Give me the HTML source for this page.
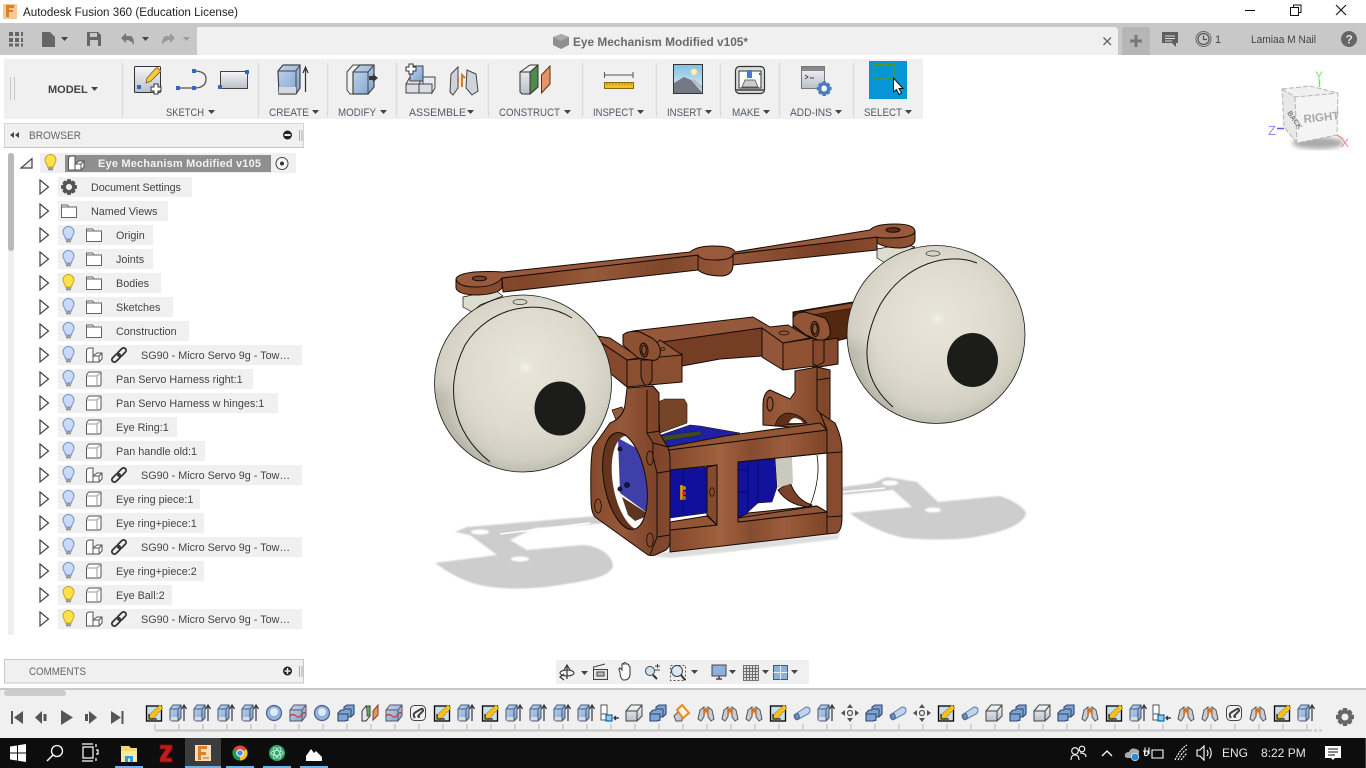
<!DOCTYPE html>
<html lang="en"><head><meta charset="utf-8"><title>Autodesk Fusion 360</title>
<style>
html,body{margin:0;padding:0;width:1366px;height:768px;overflow:hidden;background:#fff}
svg{display:block;position:absolute;left:0;top:0}
text{font-family:"Liberation Sans",sans-serif;font-size:11px;fill:#444}
.tb{font-size:11px;fill:#515a68}
.br text{fill:#444;font-size:10.8px}
</style></head><body>
<svg width="1366" height="768" viewBox="0 0 1366 768" xmlns="http://www.w3.org/2000/svg">
<defs>
<linearGradient id="wood" gradientUnits="userSpaceOnUse" x1="590" y1="0" x2="850" y2="0"><stop offset="0" stop-color="#84492c"/><stop offset=".12" stop-color="#96583b"/><stop offset=".25" stop-color="#7d442a"/><stop offset=".36" stop-color="#8a4e31"/><stop offset=".5" stop-color="#a0623f"/><stop offset=".62" stop-color="#874c2f"/><stop offset=".75" stop-color="#9a5c3c"/><stop offset=".9" stop-color="#804629"/><stop offset="1" stop-color="#945637"/></linearGradient>
<linearGradient id="barw" gradientUnits="userSpaceOnUse" x1="456" y1="0" x2="915" y2="0"><stop offset="0" stop-color="#8d5030"/><stop offset=".15" stop-color="#80462b"/><stop offset=".3" stop-color="#965a39"/><stop offset=".45" stop-color="#80462b"/><stop offset=".6" stop-color="#95583a"/><stop offset=".8" stop-color="#7a3f25"/><stop offset="1" stop-color="#8f5233"/></linearGradient>
<radialGradient id="eyeL" gradientUnits="userSpaceOnUse" cx="524" cy="372" r="102" fx="526" fy="367"><stop offset="0" stop-color="#f4f2e9"/><stop offset=".07" stop-color="#e7e4d8"/><stop offset=".6" stop-color="#dedbce"/><stop offset=".85" stop-color="#d2d0c2"/><stop offset="1" stop-color="#bcbcae"/></radialGradient>
<radialGradient id="eyeR" gradientUnits="userSpaceOnUse" cx="937" cy="323" r="102" fx="937" fy="319"><stop offset="0" stop-color="#f4f2e9"/><stop offset=".07" stop-color="#e7e4d8"/><stop offset=".6" stop-color="#dedbce"/><stop offset=".85" stop-color="#d2d0c2"/><stop offset="1" stop-color="#bcbcae"/></radialGradient>
<linearGradient id="bl" x1="0" y1="0" x2="1" y2="1"><stop offset="0" stop-color="#c3d6ee"/><stop offset="1" stop-color="#7ea2cf"/></linearGradient>
<linearGradient id="gr" x1="0" y1="0" x2="0" y2="1"><stop offset="0" stop-color="#f6f6f8"/><stop offset="1" stop-color="#b9bfca"/></linearGradient>
<linearGradient id="sky" x1="0" y1="0" x2="0" y2="1"><stop offset="0" stop-color="#7fc0e6"/><stop offset="1" stop-color="#e6f0ee"/></linearGradient>
<clipPath id="holeC"><ellipse cx="625" cy="481" rx="21" ry="49" transform="rotate(-10 625 481)"/></clipPath>
<clipPath id="eyeLC"><circle cx="523" cy="383.500" r="88"/></clipPath>
<clipPath id="eyeRC"><circle cx="936" cy="334.500" r="88.500"/></clipPath>
<filter id="sb"><feGaussianBlur stdDeviation="0.9"/></filter>
<filter id="sb2"><feGaussianBlur stdDeviation="2.5"/></filter>
<filter id="sb3"><feGaussianBlur stdDeviation="6"/></filter>

<path id="c" d="M0,0h7l-3.5,4z" fill="#444"/>
<g id="ex"><path d="M-4,-7L4.5,0L-4,7Z" fill="#fff" stroke="#444" stroke-width="1.2"/></g>
<g id="bb"><path d="M-3,4C-3,1-5.500,0-5.500,-3A5.500,5.500 0 0 1 5.500,-3C5.500,0 3,1 3,4Z" fill="#cbdaf6" stroke="#7292d4"/><rect x="-2.600" y="4.500" width="5.200" height="3" rx="1" fill="#9a9a9a"/></g>
<g id="by"><path d="M-3,4C-3,1-5.500,0-5.500,-3A5.500,5.500 0 0 1 5.500,-3C5.500,0 3,1 3,4Z" fill="#ffe24a" stroke="#c7a625"/><rect x="-2.600" y="4.500" width="5.200" height="3" rx="1" fill="#9a9a9a"/></g>
<path id="fo" d="M-7.500,6.500V-6H-1.500L0,-4H7.500V6.500ZM-7.500,-4H0" fill="#fff" stroke="#666"/>
<g id="cp" fill="#fff" stroke="#555"><path d="M-7.500,7V-4Q-7.500,-7-4,-7H-1V7Z"/><path d="M-1,1L3,-2H8V4L5,7H-1Z"/><path d="M-1,1H5V7M5,1L8,-2"/></g>
<g id="bd" fill="#fff" stroke="#555"><path d="M-7.500,7V-3Q-7.500,-5-5,-7H7V5Q7,7 5,7Z"/><path d="M-7.500,-3H3V7M3,-3L7,-7" stroke="#999"/></g>
<g id="lk" fill="none" stroke="#333" stroke-width="1.800" transform="rotate(-45)"><rect x="-9" y="-2.500" width="10" height="5" rx="2.500"/><rect x="-1" y="-2.500" width="10" height="5" rx="2.500"/></g>

<g id="tex"><g transform="translate(1,0)"><path d="M-8,7V-4L-5,-8H3V5L0,8H-6Z" fill="url(#bl)" stroke="#445a80"/><path d="M-8,-4H0V8M0,-4L3,-8" fill="none" stroke="#445a80"/><rect x="-7.500" y="4" width="7" height="3.500" fill="#d8dde4"/></g><path d="M7,8V-7M4.500,-4L7,-8L9.500,-4" fill="none" stroke="#333" stroke-width="1.200"/></g>
<g id="tsk"><rect x="-7.500" y="-7" width="15" height="15" fill="#c9dcf0" stroke="#000" stroke-width="1.300"/><path d="M-5,6L-4,1L6,-8L9,-5L0,5Z" fill="#f3c11f" stroke="#7a6a20" stroke-width=".5"/><path d="M-5,1V6H3" fill="none" stroke="#222" stroke-width="1.200"/></g>
<g id="tsp"><circle r="7.500" fill="#8fb3dc" stroke="#4a628c" stroke-width="1.200"/><circle cy="-1" r="4" fill="#dfeaf6"/></g>
<g id="tsb"><path d="M-8,-3L-4,-8H8V3L4,8H-8Z" fill="url(#bl)" stroke="#556"/><path d="M-8,-3H4V8M4,-3L8,-8" fill="none" stroke="#556"/><path d="M-8,3Q-5,0-2,3T4,1Q6,-1,8,0" fill="none" stroke="#d6321f" stroke-width="1.200"/></g>
<g id="tco"><path d="M-8,0L-5,-3H-2V-6L1,-8H8V1L5,4H2V7L-1,8H-8Z" fill="#7da3d3" stroke="#2b4570" stroke-width="1.100"/><path d="M-8,1H2V8M-2,-3V-3M-1,-4H5V4" fill="none" stroke="#2b4570"/></g>
<g id="tpl"><path d="M-8,-2L-4,-7H0V3L-4,8H-8Z" fill="#e4e6ea" stroke="#333"/><path d="M-4,-7H0V3H-3V-2Z" fill="#6ea264" stroke="#333" stroke-width=".7"/><path d="M3,7V-2L8,-8V2Z" fill="#e59568" stroke="#7a4427"/></g>
<g id="tlk"><rect x="-7.500" y="-7.500" width="15" height="15" rx="4" fill="#f2f2f2" stroke="#444"/><path d="M-3,5Q-6,1-2,-1L3,-4Q5,-5 5,-2L1,2Q-1,4 2,4" fill="none" stroke="#444" stroke-width="2"/></g>
<g id="tjo"><path d="M-8,6L-6,-3L-2,-6V4L-5,8Z" fill="#c9ccd2" stroke="#555"/><path d="M8,6L6,-3L2,-6V4L5,8Z" fill="#c9ccd2" stroke="#555"/><path d="M-2,1L0,-4L2,1" fill="none" stroke="#e0761c" stroke-width="2"/></g>
<g id="tjp"><rect x="-8" y="-8" width="6" height="9" fill="#fff" stroke="#555"/><rect x="-8" y="1" width="6" height="6" fill="#fff" stroke="#555"/><rect x="-3" y="2" width="6" height="6" fill="#9cc6ea" stroke="#0a68b0" stroke-width="1.200"/><path d="M10,5H5M7,3L5,5L7,7" fill="none" stroke="#222" stroke-width="1.200"/></g>
<g id="tbx"><path d="M-8,-2L-3,-8H8V3L3,8H-8Z" fill="url(#gr)" stroke="#444"/><path d="M-8,-2H3V8M3,-2L8,-8" fill="none" stroke="#444"/></g>
<g id="tfi"><path d="M-8,3L-4,-1L0,4V8H-6Z" fill="#c7ccd4" stroke="#555"/><path d="M-5,-3L0,-8L7,0L1,5Z" fill="#f9f3e6" stroke="#ec8a1c" stroke-width="2"/></g>
<g id="ttu"><path d="M-8,2L4,-6Q8,-6 8,-3Q8,0 6,1L-5,7Q-8,6-8,2Z" fill="#c2d4ea" stroke="#5a7aa8"/><ellipse cx="-5" cy="3.500" rx="2.300" ry="3" fill="#6e8fbc" stroke="#44628c"/></g>
<g id="tmv" fill="#555"><circle r="2.500" fill="none" stroke="#555" stroke-width="1.200"/><path d="M0,-9L3,-5H-3ZM0,9L3,5H-3ZM-9,0L-5,3V-3ZM9,0L5,3V-3Z"/></g>
<path id="gear" d="M-2,-9H2L2.600,-6.400L4.800,-7.500L7.500,-4.800L6.400,-2.600L9,-2V2L6.400,2.600L7.500,4.800L4.800,7.500L2.600,6.400L2,9H-2L-2.600,6.400L-4.800,7.500L-7.500,4.800L-6.400,2.600L-9,2V-2L-6.400,-2.600L-7.500,-4.800L-4.800,-7.500L-2.600,-6.400ZM0,-3.500A3.500,3.500 0 1 0 0,3.500A3.500,3.500 0 1 0 0,-3.500Z" fill-rule="evenodd"/>
</defs>

<!-- window chrome -->
<rect width="1366" height="768" fill="#fff"/>
<rect x="3" y="4" width="14" height="15" rx="1" fill="#f7c89c"/><path d="M6,5H14V8H9V10H13V12H9V17H6Z" fill="#dd7f25"/>
<text x="23" y="16" style="font-size:12.400px;fill:#222" textLength="215" lengthAdjust="spacingAndGlyphs">Autodesk Fusion 360 (Education License)</text>
<path d="M1245,10.500H1255" stroke="#111" stroke-width="1"/>
<path d="M1290.500,7.500h8v8h-8zM1293.500,7.500v-2.500h7.500v7.500h-2.500" fill="none" stroke="#111"/>
<path d="M1336,5L1346,15M1346,5L1336,15" stroke="#111" stroke-width="1.100"/>

<rect x="0" y="23" width="1366" height="32" fill="#c8c8c8"/>
<path d="M197,55V27Q197,27 201,27H1114Q1118,27 1118,31V55Z" fill="#f0f0f0"/>
<path d="M1122,55V30Q1122,27 1125,27H1147Q1150,27 1150,30V55Z" fill="#b6b6b6"/>
<path d="M1136,35V47M1130,41H1142" stroke="#777" stroke-width="3"/>
<path d="M9,32h4v4h-4zM15,32h4v4h-4zM21,32h2v4h-2zM9,38h4v4h-4zM15,38h4v4h-4zM21,38h2v4h-2zM9,43.500h4v3h-4zM15,43.500h4v3h-4zM21,43.500h2v3h-2z" fill="#666"/>
<path d="M42,32H50L55,37V47H42Z" fill="#666"/><use href="#c" x="61" y="37" />
<path d="M87,32H98L101,35V46H87Z" fill="#666"/><rect x="90" y="33" width="7" height="4" fill="#c8c8c8"/><rect x="90" y="40" width="8" height="6" fill="#c8c8c8"/>
<path d="M121,38L126,33V36H131Q134,38 134,45Q131,40 126,40V43Z" fill="#777"/><use href="#c" x="142" y="37"/>
<path d="M175,38L170,33V36H165Q162,38 162,45Q165,40 170,40V43Z" fill="#9a9a9a"/><path d="M183,37h7l-3.500,4z" fill="#999"/>
<path d="M553,37L561,34L569,37V45L561,49L553,45Z" fill="#8f8f8f"/><path d="M553,37L561,41L569,37L561,34Z" fill="#aaa"/>
<text x="573" y="46" style="font-size:12px;font-weight:bold;fill:#6a6a6a" textLength="175" lengthAdjust="spacingAndGlyphs">Eye Mechanism Modified v105*</text>
<path d="M1103.500,37.500L1111,45M1111,37.500L1103.500,45" stroke="#666" stroke-width="1.400"/>
<path d="M1162,32H1178V43H1176V47L1172,43H1162Z" fill="#5f5f5f"/><path d="M1165,36H1175M1165,38.500H1175M1165,41H1172" stroke="#ddd"/>
<circle cx="1203.500" cy="39" r="7.500" fill="#c8c8c8" stroke="#666" stroke-width="1"/><circle cx="1203.500" cy="39" r="5.500" fill="#c8c8c8" stroke="#555" stroke-width="1.200"/><path d="M1203.500,35.500V39.500H1207" fill="none" stroke="#555" stroke-width="1.200"/>
<text x="1215" y="43">1</text>
<text x="1251" y="43" style="font-size:11px" textLength="65" lengthAdjust="spacingAndGlyphs">Lamiaa M Nail</text>
<circle cx="1349" cy="39" r="8" fill="#666"/><text x="1345.500" y="43.500" style="font-size:12px;font-weight:bold;fill:#ddd">?</text>

<!-- toolbar -->
<rect x="4" y="59" width="919" height="60" fill="#f0f0f0"/>
<path d="M10.500,77V100M14.500,77V100" stroke="#c8c8c8"/>
<text x="48" y="93" style="font-size:11px;font-weight:bold;fill:#444">MODEL</text><use href="#c" x="91" y="87"/>
<path d="M122.500,63V117M258.500,63V117M327.500,63V117M396.500,63V117M488.500,63V117M582.500,63V117M656.500,63V117M720.500,63V117M779.500,63V117M853.500,63V117" stroke="#dcdcdc" stroke-width="1.500"/>
<g>
<text class="tb" x="166" y="116" textLength="38" lengthAdjust="spacingAndGlyphs">SKETCH</text><use href="#c" x="208" y="110"/>
<text class="tb" x="269" y="116" textLength="40" lengthAdjust="spacingAndGlyphs">CREATE</text><use href="#c" x="312" y="110"/>
<text class="tb" x="338" y="116" textLength="38" lengthAdjust="spacingAndGlyphs">MODIFY</text><use href="#c" x="380" y="110"/>
<text class="tb" x="409" y="116" textLength="57" lengthAdjust="spacingAndGlyphs">ASSEMBLE</text><use href="#c" x="467" y="110"/>
<text class="tb" x="499" y="116" textLength="61" lengthAdjust="spacingAndGlyphs">CONSTRUCT</text><use href="#c" x="564" y="110"/>
<text class="tb" x="593" y="116" textLength="41" lengthAdjust="spacingAndGlyphs">INSPECT</text><use href="#c" x="637" y="110"/>
<text class="tb" x="667" y="116" textLength="35" lengthAdjust="spacingAndGlyphs">INSERT</text><use href="#c" x="705" y="110"/>
<text class="tb" x="732" y="116" textLength="28" lengthAdjust="spacingAndGlyphs">MAKE</text><use href="#c" x="763" y="110"/>
<text class="tb" x="790" y="116" textLength="42" lengthAdjust="spacingAndGlyphs">ADD-INS</text><use href="#c" x="835" y="110"/>
<text class="tb" x="864" y="116" textLength="38" lengthAdjust="spacingAndGlyphs">SELECT</text><use href="#c" x="905" y="110"/>
</g>
<!-- sketch -->
<rect x="134.500" y="66.500" width="26" height="26" rx="1" fill="url(#gr)" stroke="#333"/>
<path d="M146,83L147,78L157,67L161,71L151,81Z" fill="#f5cb3a" stroke="#7a5a20" stroke-width=".8"/><path d="M157,67L161,71L160,72L156,68Z" fill="#e88838"/>
<rect x="137" y="85" width="4" height="4" fill="#3667c5"/>
<path d="M154,84h4v3h3v4h-3v3h-4v-3h-3v-4h3z" fill="#fff" stroke="#333"/>
<!-- line -->
<path d="M178,88H194Q206,88 206,79Q206,71 194,71" fill="none" stroke="#555" stroke-width="1.300"/>
<path d="M176,86h4v4h-4zM192,86h4v4h-4zM192,69h4v4h-4z" fill="#3667c5"/>
<!-- rect -->
<rect x="220.500" y="71.500" width="27" height="17" fill="url(#gr)" stroke="#444"/>
<path d="M218,85h4v4h-4zM245,70h4v4h-4z" fill="#3667c5"/>
<!-- create -->
<path d="M278,71L283,65H300V88L296,94H279Z" fill="url(#bl)" stroke="#444" stroke-width="1.200"/><path d="M278,71H296V94M296,71L300,65" fill="none" stroke="#444"/><rect x="279" y="87" width="17" height="6.500" fill="#d5d9df"/>
<path d="M305.500,92V69M303,73L305.500,67L308,73" fill="none" stroke="#333" stroke-width="1.200"/>
<!-- modify -->
<path d="M347,72L353,65H361V94H350L347,90Z" fill="#f2f2f2" stroke="#444"/>
<path d="M353,72L360,65H374V87L368,94H353Z" fill="url(#bl)" stroke="#444" stroke-width="1.200"/><path d="M353,72H368V94M368,72L374,65" fill="none" stroke="#444"/>
<path d="M369,76H373V74L378,78L373,82V80H369Z" fill="#333"/>
<!-- assemble -->
<path d="M406,84H419V93H406ZM419,84H432V93H419Z" fill="#dadde2" stroke="#444"/><path d="M406,84L410,77H423V84ZM419,84L423,77H435V88L432,93V84Z" fill="#e8eaee" stroke="#444"/>
<path d="M410,66H423V81H410Z" fill="url(#bl)" stroke="#444"/>
<path d="M409,64h4v3h3v4h-3v3h-4v-3h-3v-4h3z" fill="#fff" stroke="#333"/>
<!-- joint -->
<path d="M450,92L451,74L458,67V88L453,95Z" fill="#d0d3d8" stroke="#444"/><path d="M478,91L476,74L467,70L466,88L472,95Z" fill="#d0d3d8" stroke="#444"/><path d="M458,83V78M465,78L462,75V87" fill="none" stroke="#e0761c" stroke-width="2"/>
<!-- construct -->
<path d="M520,72L530,65H538V87L530,94H522L520,92Z" fill="url(#gr)" stroke="#333"/><path d="M530,72L538,65V87L530,94Z" fill="#4f8a4a" stroke="#333"/><path d="M520,72H530" stroke="#333"/>
<path d="M541.500,93V75L550,66V84Z" fill="#e49466" stroke="#5f3216"/>
<!-- inspect -->
<path d="M604.500,72V78M633,72V78M604.500,75H633" stroke="#555" fill="none"/>
<rect x="604.500" y="82.500" width="29" height="6" fill="#f0c020" stroke="#8a6a10"/>
<path d="M607,83V85M610,83V85M613,83V85M616,83V85M619,83V85M622,83V85M625,83V85M628,83V85M631,83V85" stroke="#8a6a10" stroke-width=".7"/>
<!-- insert -->
<rect x="673.500" y="64.500" width="29" height="29" fill="url(#sky)" stroke="#333"/><circle cx="694" cy="72" r="3" fill="#fff3c0" stroke="#f4dc8a"/>
<path d="M674,93V83L684,77L691,80L702,92V93Z" fill="#737a86"/><path d="M691,80L702,90V86L695,80Z" fill="#b6bcc6"/>
<!-- make -->
<rect x="735.500" y="66.500" width="29" height="27" rx="4" fill="#ddd" stroke="#333" stroke-width="1.200"/><rect x="739" y="71" width="22" height="17" fill="#fff" stroke="#333"/><path d="M736,90H764" stroke="#666" stroke-width="2"/><rect x="747" y="70" width="5" height="8" fill="#4a7ac5"/><path d="M742,87L745,80H755L758,87Z" fill="#ccc" stroke="#444" stroke-width=".7"/><rect x="759" y="73" width="2" height="2" fill="#1a9a2a"/>
<!-- add-ins -->
<rect x="801.500" y="66.500" width="23" height="22" fill="url(#gr)" stroke="#777"/><rect x="802" y="67" width="22" height="4" fill="#888"/>
<path d="M805,75L808,77L805,79M810,78H814" fill="none" stroke="#444"/>
<use href="#gear" x="824" y="88" fill="#4e7cb8" transform="translate(148.500 16.500) scale(.82)" />
<circle cx="824" cy="88" r="2.500" fill="#fff"/>
<!-- select -->
<rect x="869" y="61" width="38" height="38" fill="#0696d7"/><rect x="873.500" y="64.500" width="20.500" height="14.500" fill="none" stroke="#5a9a10" stroke-width="1.200"/>
<path d="M893.500,78V92L896.500,89.500L899,94.500L901.500,93L899,88.500H903Z" fill="#fff" stroke="#111"/>

<!-- browser -->
<rect x="4.500" y="123.500" width="299" height="24" fill="#f0f0f0" stroke="#d4d4d4"/><path d="M4,147.500H304" stroke="#c4c4c4"/>
<path d="M10,135L14,132V138ZM15,135L19,132V138Z" fill="#444"/>
<text x="29" y="139" style="font-size:11px;fill:#666" textLength="52" lengthAdjust="spacingAndGlyphs">BROWSER</text>
<circle cx="287.500" cy="135" r="4.500" fill="#222"/><rect x="284.500" y="134" width="6" height="2" fill="#eee"/>
<path d="M299.500,130V141M302,130V141" stroke="#aaa"/>
<rect x="8" y="153" width="6" height="482" fill="#f0f0f0"/><rect x="8" y="153" width="6" height="98" rx="3" fill="#b9b9b9"/>

<g class="br">
<rect x="40" y="153" width="256" height="20" fill="#f0f0f0"/>
<path d="M32,158.500V168H21Z" fill="#eee" stroke="#444" stroke-width="1.200"/>
<use href="#by" x="50.500" y="163"/>
<rect x="65" y="155" width="206" height="17" fill="#8f8f8f"/>
<use href="#cp" x="76" y="163"/>
<text x="98" y="167" style="font-weight:bold;fill:#f2f2f2;font-size:11px;letter-spacing:.18px">Eye Mechanism Modified v105</text>
<circle cx="282" cy="163.500" r="6" fill="#f8f8f8" stroke="#444"/><circle cx="282" cy="163.500" r="2" fill="#333"/>

<g><rect x="58" y="177" width="134" height="20" fill="#f0f0f0"/><use href="#ex" x="44" y="187"/><use href="#gear" transform="translate(69 187) scale(.88)" fill="#555"/><text x="91" y="191" style="letter-spacing:-.08px">Document Settings</text></g>
<g><rect x="58" y="201" width="110" height="20" fill="#f0f0f0"/><use href="#ex" x="44" y="211"/><use href="#fo" x="69" y="211"/><text x="91" y="215">Named Views</text></g>
<g><rect x="58" y="225" width="95" height="20" fill="#f0f0f0"/><use href="#ex" x="44" y="235"/><use href="#bb" x="68.500" y="235"/><use href="#fo" x="94" y="235"/><text x="116" y="239">Origin</text></g>
<g><rect x="58" y="249" width="95" height="20" fill="#f0f0f0"/><use href="#ex" x="44" y="259"/><use href="#bb" x="68.500" y="259"/><use href="#fo" x="94" y="259"/><text x="116" y="263">Joints</text></g>
<g><rect x="58" y="273" width="103" height="20" fill="#f0f0f0"/><use href="#ex" x="44" y="283"/><use href="#by" x="68.500" y="283"/><use href="#fo" x="94" y="283"/><text x="116" y="287">Bodies</text></g>
<g><rect x="58" y="297" width="115" height="20" fill="#f0f0f0"/><use href="#ex" x="44" y="307"/><use href="#bb" x="68.500" y="307"/><use href="#fo" x="94" y="307"/><text x="116" y="311">Sketches</text></g>
<g><rect x="58" y="321" width="131" height="20" fill="#f0f0f0"/><use href="#ex" x="44" y="331"/><use href="#bb" x="68.500" y="331"/><use href="#fo" x="94" y="331"/><text x="116" y="335">Construction</text></g>
<g><rect x="58" y="345" width="244" height="20" fill="#f0f0f0"/><use href="#ex" x="44" y="355"/><use href="#bb" x="68.500" y="355"/><use href="#cp" x="94" y="355"/><use href="#lk" transform="translate(119 355)"/><text x="141" y="359">SG90 - Micro Servo 9g - Tow…</text></g>
<g><rect x="58" y="369" width="195" height="20" fill="#f0f0f0"/><use href="#ex" x="44" y="379"/><use href="#bb" x="68.500" y="379"/><use href="#bd" x="94" y="379"/><text x="116" y="383">Pan Servo Harness right:1</text></g>
<g><rect x="58" y="393" width="220" height="20" fill="#f0f0f0"/><use href="#ex" x="44" y="403"/><use href="#bb" x="68.500" y="403"/><use href="#bd" x="94" y="403"/><text x="116" y="407">Pan Servo Harness w hinges:1</text></g>
<g><rect x="58" y="417" width="119" height="20" fill="#f0f0f0"/><use href="#ex" x="44" y="427"/><use href="#bb" x="68.500" y="427"/><use href="#bd" x="94" y="427"/><text x="116" y="431">Eye Ring:1</text></g>
<g><rect x="58" y="441" width="147" height="20" fill="#f0f0f0"/><use href="#ex" x="44" y="451"/><use href="#bb" x="68.500" y="451"/><use href="#bd" x="94" y="451"/><text x="116" y="455">Pan handle old:1</text></g>
<g><rect x="58" y="465" width="244" height="20" fill="#f0f0f0"/><use href="#ex" x="44" y="475"/><use href="#bb" x="68.500" y="475"/><use href="#cp" x="94" y="475"/><use href="#lk" transform="translate(119 475)"/><text x="141" y="479">SG90 - Micro Servo 9g - Tow…</text></g>
<g><rect x="58" y="489" width="142" height="20" fill="#f0f0f0"/><use href="#ex" x="44" y="499"/><use href="#bb" x="68.500" y="499"/><use href="#bd" x="94" y="499"/><text x="116" y="503">Eye ring piece:1</text></g>
<g><rect x="58" y="513" width="146" height="20" fill="#f0f0f0"/><use href="#ex" x="44" y="523"/><use href="#bb" x="68.500" y="523"/><use href="#bd" x="94" y="523"/><text x="116" y="527">Eye ring+piece:1</text></g>
<g><rect x="58" y="537" width="244" height="20" fill="#f0f0f0"/><use href="#ex" x="44" y="547"/><use href="#bb" x="68.500" y="547"/><use href="#cp" x="94" y="547"/><use href="#lk" transform="translate(119 547)"/><text x="141" y="551">SG90 - Micro Servo 9g - Tow…</text></g>
<g><rect x="58" y="561" width="146" height="20" fill="#f0f0f0"/><use href="#ex" x="44" y="571"/><use href="#bb" x="68.500" y="571"/><use href="#bd" x="94" y="571"/><text x="116" y="575">Eye ring+piece:2</text></g>
<g><rect x="58" y="585" width="114" height="20" fill="#f0f0f0"/><use href="#ex" x="44" y="595"/><use href="#by" x="68.500" y="595"/><use href="#bd" x="94" y="595"/><text x="116" y="599">Eye Ball:2</text></g>
<g><rect x="58" y="609" width="244" height="20" fill="#f0f0f0"/><use href="#ex" x="44" y="619"/><use href="#by" x="68.500" y="619"/><use href="#cp" x="94" y="619"/><use href="#lk" transform="translate(119 619)"/><text x="141" y="623">SG90 - Micro Servo 9g - Tow…</text></g>
</g>

<!-- comments -->
<rect x="4.500" y="659.500" width="299" height="23.500" fill="#f0f0f0" stroke="#c8c8c8"/>
<text x="29" y="675" style="font-size:11px;fill:#666" textLength="57" lengthAdjust="spacingAndGlyphs">COMMENTS</text>
<circle cx="287.500" cy="671" r="4.500" fill="#222"/><path d="M284.500,671H290.500M287.500,668V674" stroke="#eee" stroke-width="1.500"/>
<path d="M299.500,666V677M302,666V677" stroke="#aaa"/>

<!-- MODEL 3D -->
<g id="shadows" fill="#cdcdcd" filter="url(#sb)">
<path d="M435,563L497,555L470,535L455,532L467,527L597,516L610,523L535,528L510,540L527,550L583,545C600,546 613,556 613,566C610,577 590,580 560,585C530,590 495,590 472,583C455,577 445,570 435,563Z"/>
<path d="M850,513L912,507L893,490L842,495V487L873,483L887,477L917,482L938,502L1000,496C1012,500 1026,508 1026,514C1022,526 1000,533 970,538C950,540 925,540 905,538C885,534 865,525 850,513Z"/>
<path d="M650,556L670,558L720,553L838,539L840,534L720,545L665,552Z" fill="#dedede"/>
</g>
<g fill="#fff" filter="url(#sb)"><ellipse cx="480" cy="532" rx="9" ry="2.500"/><ellipse cx="520" cy="559" rx="9" ry="2.500"/><ellipse cx="890" cy="483" rx="8" ry="2.500"/><ellipse cx="933" cy="510" rx="8" ry="2.500"/></g>
<path d="M500,534L590,523" stroke="#fff" stroke-width="1.500"/><path d="M842,492L885,488" stroke="#fff" stroke-width="1.500"/>

<g stroke="#160b06" stroke-width="1" stroke-linejoin="round">
<!-- rear hinge right -->
<path d="M793,312L853,302L852,337L820,345L793,330Z" fill="#54280f"/>
<path d="M793,313L853,303L853,308L805,316Z" fill="#8a4f31" stroke-width=".6"/>
<path d="M813,342L838,338L838,364L813,368Z" fill="#84492e"/>
<!-- beam -->
<path d="M623,335L633,331L753,317L770,327L788,325L810,338L783,343L762,328L660,343Z" fill="#96583a"/>
<path d="M655,343L762,328L762,356L720,359L682,366L655,360Z" fill="#753d24"/>
<path d="M762,328L783,343V370L762,357Z" fill="#945638"/>
<path d="M783,343L815,338V366L783,370Z" fill="#8e5233"/>
<ellipse cx="784" cy="333" rx="5" ry="2" fill="#96583a" stroke-width=".7"/>
<!-- left block -->
<path d="M590,335L610,338L640,358L627,360L605,345Z" fill="#925536"/>
<path d="M600,342L627,360V387L600,365Z" fill="#84492c"/>
<path d="M627,360L682,354V382L627,387Z" fill="#8a4f31"/>
<path d="M640,358L660,340L682,355L627,360Z" fill="#925738"/>
<ellipse cx="663" cy="349" rx="2" ry="1.500" fill="none" stroke-width=".7"/>
<!-- left knob -->
<path d="M623,335Q628,330 640,332L652,338Q662,345 660,355Q658,362 650,360L638,358L623,345Z" fill="#8c5032"/>
<ellipse cx="644" cy="350" rx="4" ry="7" fill="#744026" transform="rotate(-8 644 350)"/><ellipse cx="644" cy="350" rx="2.200" ry="4.500" fill="#8c5032"/>
<path d="M641,360H652V380Q650,386 645,385Q641,380 641,375Z" fill="#84492c"/>
<!-- right knob -->
<path d="M793,318Q796,312 805,312L825,318Q831,325 830,335Q825,342 818,340L806,335L793,325Z" fill="#925536"/>
<ellipse cx="815" cy="329" rx="4" ry="7.500" fill="#744026" transform="rotate(-5 815 329)"/><ellipse cx="815" cy="329" rx="2.300" ry="5" fill="#925536"/>
<path d="M813,340H824V362L817,366L813,364Z" fill="#84492c"/>
<!-- link gray -->
<path d="M463,297V307L472,312L480,305L503,296L495,290Z" fill="#dcdccf" stroke-width=".7"/>
<path d="M877,249L877,258L885,263L893,257L915,247L905,244Z" fill="#dcdccf" stroke-width=".7"/>
<!-- link sides -->
<path d="M502,278L698,255V270L503,292Z" fill="url(#barw)"/>
<path d="M733,254L877,237V250L733,265Z" fill="url(#barw)"/>
<path d="M698,255L698,270Q705,276 722,276Q733,275 733,265V254Z" fill="url(#barw)"/>
<path d="M456,279V288Q458,295 478,295Q498,294 502,288V279Z" fill="url(#barw)"/>
<path d="M877,232V243Q885,248 900,248Q914,247 915,240V231Z" fill="url(#barw)"/>
<!-- link top -->
<path d="M456,279Q457,274 474,272Q490,271 503,272L690,252Q697,246 713,246Q733,246 735,252L870,230Q875,224 895,224Q914,224 915,231Q914,238 890,238Q878,238 877,237L733,254Q732,260 715,260Q700,260 698,255L502,278Q495,287 476,287Q458,287 456,279Z" fill="#98593c" stroke="#160b06"/>
<ellipse cx="479.500" cy="278.500" rx="7" ry="2.300" fill="#7a4228"/>
<ellipse cx="893" cy="230" rx="7" ry="2.300" fill="#5e2f18"/>

<!-- rear right plate -->
<path d="M763,425V403Q764,392 770,390L790,399L795,392V371L817,367L830,370V430Z" fill="url(#wood)"/>
<ellipse cx="770" cy="404" rx="3" ry="7" fill="none"/>
<path d="M775,426Q778,414 788,413Q800,414 807,423Z" fill="#5f2f19" stroke-width=".7"/>
<path d="M789,423Q791,418 795,418Q801,419 803,423Z" fill="#fff" stroke="none"/>
<path d="M817,367V410L820,413" fill="none"/>
<path d="M817,380L830,378" fill="none"/>

<!-- servo top / block -->
<path d="M658,402L665,399L684,399L687,404V423L660,433Z" fill="#774428" stroke-width=".6"/>
<path d="M658,436L690,425L700,426L723,430L740,433L668,447Z" fill="#2020a6" stroke-width=".5"/>
<path d="M660,436L700,431L702,435L664,441Z" fill="#3d4a28" stroke-width=".3"/>

<!-- front box -->
<path d="M668,450L827,430V534L670,552Z" fill="url(#wood)"/>
<path d="M668,447L725,436L820,423L827,430L668,450Z" fill="#925536"/>
<!-- window 1 -->
<path d="M670,470L717,465V525L670,530Z" fill="#fff"/>
<path d="M670,470L707,467V513L670,518Z" fill="#10109c" stroke-width=".5"/>
<path d="M683,469V516" stroke="#050560" stroke-width=".7" fill="none"/>
<path d="M707,467L717,465V525L707,515Z" fill="#824a2f"/>
<path d="M670,522L707,516L717,525L670,530Z" fill="#925536"/>
<rect x="680" y="485" width="3" height="15" fill="#e09a20" stroke-width=".3"/><circle cx="684" cy="488" r="2" fill="#c8801f" stroke="none"/><circle cx="684" cy="493" r="2" fill="#d8261c" stroke="none"/><circle cx="684" cy="498" r="2" fill="#a06a1f" stroke="none"/>
<ellipse cx="712" cy="492" rx="2.300" ry="4.300" fill="none" stroke-width=".7"/>
<!-- window 2 -->
<path d="M738,462L827,453V512L738,522Z" fill="#fff"/>
<path d="M778,490Q788,505 808,507L812,505Q796,500 790,482Z" fill="#7a4329"/>
<path d="M792,457L793,483L778,488L775,458Z" fill="#c9c9bf" stroke="none"/>
<path d="M738,462L775,458L777,487L772,502L758,503L748,512V514L738,518Z" fill="#12129e" stroke-width=".5"/>
<path d="M758,461V503M738,470H748M748,462V512M738,492H748" fill="none" stroke="#050560" stroke-width=".7"/>
<path d="M817,455Q821,478 810,506" fill="none" stroke-width=".8"/>
<path d="M748,513L817,506L827,512L738,522V518Z" fill="#8f5639"/>
<path d="M738,522V462L827,453" fill="none"/>
<path d="M738,518L817,506L827,512" fill="none"/>
<!-- right plate -->
<path d="M820,413L835,423Q842,438 842,450V517Q842,530 837,533L827,534V430Z" fill="#874c2f"/>
<path d="M827,453L842,452M827,517L842,516" fill="none"/>

<!-- front left plate -->
<path d="M612,410L622,407L627,418L618,425Z" fill="#965a3a" stroke-width=".7"/>
<path d="M627,388L653,386L659,393V431L660,434L668,448Q670,452 670,460V540Q670,547 666,550L655,555Q652,556 648,555L595,517Q591,512 591,500Q590,460 593,447L610,423Q623,418 625,405Z" fill="url(#wood)"/>
<path d="M647,390V433L653,443L653,457L657,473V537L650,555" fill="none"/>
<path d="M647,433L660,431M657,473L670,471M657,537L670,535M653,443L668,447" fill="none"/>
<g clip-path="url(#holeC)">
<rect x="595" y="425" width="60" height="110" fill="#64351e" stroke="none"/>
<ellipse cx="634" cy="483" rx="21" ry="48" fill="#fff" stroke="none" transform="rotate(-10 634 483)"/>
<path d="M618,438L640,450L652,483L650,515L620,493Z" fill="#3f3fa8" stroke="none"/>
<path d="M622,497L650,515L635,521L628,515Z" fill="#5c3520" stroke="none"/>
<circle cx="620" cy="449" r="2.500" fill="#15153c" stroke="none"/><circle cx="627" cy="485" r="3" fill="#15153c" stroke="none"/><circle cx="620" cy="489" r="2.500" fill="#15153c" stroke="none"/>
</g>
<ellipse cx="625" cy="481" rx="21" ry="49" fill="none" transform="rotate(-10 625 481)"/>
<ellipse cx="650" cy="458" rx="3.300" ry="7" fill="none" stroke-width=".8"/>
<ellipse cx="598" cy="506" rx="3.300" ry="7" fill="none" stroke-width=".8"/>
<ellipse cx="650" cy="540" rx="3.300" ry="7" fill="none" stroke-width=".8"/>
</g>

<!-- eyes -->
<circle cx="523" cy="383.500" r="88.500" fill="url(#eyeL)" stroke="#1a1a16" stroke-width=".8"/>
<g clip-path="url(#eyeLC)"><path d="M452,390Q450,430 490,462L460,490L420,440L425,385Z" fill="#a0a094" opacity=".4" filter="url(#sb3)"/></g>
<ellipse cx="520" cy="302" rx="7" ry="2.600" fill="#d6d6c8" stroke="#333" stroke-width=".7"/>
<path d="M572,318C540,298 490,305 465,345C445,385 450,430 490,462" fill="none" stroke="#1a1a16"/>
<ellipse cx="560" cy="408.500" rx="25.500" ry="27" fill="#1c1c1a"/>
<circle cx="936" cy="334.500" r="89" fill="url(#eyeR)" stroke="#1a1a16" stroke-width=".8"/>
<g clip-path="url(#eyeRC)"><path d="M866,345Q862,385 893,407L870,430L835,390L838,340Z" fill="#a0a094" opacity=".4" filter="url(#sb3)"/></g>
<ellipse cx="933" cy="253.500" rx="7" ry="2.600" fill="#d6d6c8" stroke="#333" stroke-width=".7"/>
<path d="M977,263C950,252 905,262 880,305C860,345 862,380 893,407" fill="none" stroke="#1a1a16"/>
<ellipse cx="972.500" cy="360" rx="25.500" ry="27" fill="#1c1c1a"/>

<!-- viewcube -->
<ellipse cx="1318" cy="143" rx="26" ry="6" fill="#aaa" filter="url(#sb2)"/>
<path d="M1282,89L1310,86L1338,93L1337,135L1297,143L1284,127Z" fill="#f0f0f0"/>
<path d="M1295,97L1338,93L1337,135L1297,143Z" fill="#f4f4f4"/>
<path d="M1282,89L1295,97L1297,143L1284,127Z" fill="#e8e8e8"/>
<path d="M1282,89L1310,86L1338,93L1337,135L1297,143L1284,127ZM1282,89L1295,97L1338,93M1295,97L1297,143" fill="none" stroke="#b4b4b4" stroke-width="1" stroke-dasharray="5 2"/>
<text x="1304" y="123" transform="rotate(-6 1304 123)" style="font-size:11.500px;fill:#a8a8ae;font-weight:bold">RIGHT</text>
<text x="1287" y="113" transform="rotate(55 1287 113)" style="font-size:7px;fill:#777;font-weight:bold">BACK</text>
<text x="1315" y="80" style="font-size:12px;fill:#7ce87c">Y</text><path d="M1319.500,80V87" stroke="#6be06b" stroke-width="1.500"/>
<text x="1268" y="135" style="font-size:13px;fill:#8a8af0">Z</text><path d="M1277,128.500H1284" stroke="#5a5af0" stroke-width="1.500"/>
<text x="1341" y="147" style="font-size:12px;fill:#f08a8a">X</text><path d="M1337,135L1343,139" stroke="#f08a8a" stroke-width="1.500"/>

<!-- nav bar -->
<rect x="556" y="660" width="253" height="24" fill="#f0f0f0"/>
<g fill="none" stroke="#333">
<path d="M567,666V679M564,670L567,665L570,670M564,674L560,677L564,680" stroke-width="1.200"/><ellipse cx="567" cy="673" rx="7" ry="3"/>
</g><use href="#c" x="581" y="671"/>
<g fill="#e4e4e4" stroke="#444"><rect x="593.500" y="669.500" width="14" height="10"/><rect x="597" y="672" width="7" height="4" fill="#bbb"/><path d="M593.500,669.500V667L605,664" fill="none"/></g>
<path d="M620,672Q618,668 620,668L622,670V664Q624,663 624,665V663Q626,662 626,664L627,664Q629,664 629,666L630,667V675Q629,680 625,680H623Q620,678 620,672Z" fill="#fff" stroke="#333"/>
<circle cx="650" cy="671" r="4.500" fill="#cfe2f2" stroke="#444"/><path d="M653,675L657,679" stroke="#333" stroke-width="2"/><path d="M655,666H660M657.500,664V668M655,670H660" stroke="#444"/>
<rect x="670.500" y="665.500" width="15" height="15" fill="none" stroke="#555" stroke-dasharray="2 2"/><circle cx="677" cy="671" r="5.500" fill="#d8e8f4" stroke="#444"/><path d="M681,675L685,680" stroke="#333" stroke-width="2"/><use href="#c" x="691" y="670"/>
<rect x="712" y="665" width="14" height="11" fill="#8eb0dc" stroke="#444"/><path d="M716,679H722M719,676V679" stroke="#444" stroke-width="1.500"/><use href="#c" x="729" y="670"/>
<path d="M743.500,665.500h15v15h-15zM746.500,665.500v15M749.500,665.500v15M752.500,665.500v15M755.500,665.500v15M743.500,668.500h15M743.500,671.500h15M743.500,674.500h15M743.500,677.500h15" fill="#ddd" stroke="#555" stroke-width=".8"/><use href="#c" x="762" y="670"/>
<path d="M773.500,665.500h14v14h-14z" fill="#8eb0dc" stroke="#3a5a8a"/><path d="M780.500,665.500v14M773.500,672.500h14" stroke="#eee"/><use href="#c" x="791" y="670"/>

<!-- timeline -->
<rect x="0" y="688" width="1366" height="2" fill="#c8c8c8"/>
<rect x="0" y="690" width="1366" height="48" fill="#f0f0f0"/>
<rect x="4" y="690" width="62" height="6" rx="3" fill="#cbcbcb"/>
<g fill="#555">
<path d="M11,711h2v13h-2zM23,711V724L14,717.500Z"/>
<path d="M35,717.500L42,711V724ZM43.500,714h3v7h-3z"/>
<path d="M61,710V725L73,717.500Z"/>
<path d="M85,714h3v7h-3zM89,711V724L97,717.500Z"/>
<path d="M111,711V724L121,717.500ZM121.500,711h2v13h-2z"/>
</g>
<path d="M155,730.500H1312" stroke="#c8c8c8" stroke-width="2"/><path d="M1314,730.500H1322" stroke="#c8c8c8" stroke-width="2" stroke-dasharray="3 2"/>
<path stroke="#c8c8c8" stroke-width="1.500" d="M155,724V730M179,724V730M203,724V730M227,724V730M251,724V730M275,724V730M299,724V730M323,724V730M347,724V730M371,724V730M395,724V730M419,724V730M443,724V730M467,724V730M491,724V730M515,724V730M539,724V730M563,724V730M587,724V730M611,724V730M635,724V730M659,724V730M683,724V730M707,724V730M731,724V730M755,724V730M779,724V730M803,724V730M827,724V730M851,724V730M875,724V730M899,724V730M923,724V730M947,724V730M971,724V730M995,724V730M1019,724V730M1043,724V730M1067,724V730M1091,724V730M1115,724V730M1139,724V730M1163,724V730M1187,724V730M1211,724V730M1235,724V730M1259,724V730M1283,724V730M1307,724V730"/>
<g>
<use href="#tsk" x="154" y="713"/><use href="#tex" x="177" y="713"/><use href="#tex" x="201" y="713"/><use href="#tex" x="225" y="713"/><use href="#tex" x="249" y="713"/><use href="#tsp" x="274" y="713"/><use href="#tsb" x="298" y="713"/><use href="#tsp" x="322" y="713"/><use href="#tco" x="346" y="713"/><use href="#tpl" x="370" y="713"/><use href="#tsb" x="394" y="713"/><use href="#tlk" x="418" y="713"/><use href="#tsk" x="442" y="713"/><use href="#tex" x="465" y="713"/><use href="#tsk" x="490" y="713"/><use href="#tex" x="513" y="713"/><use href="#tex" x="537" y="713"/><use href="#tex" x="561" y="713"/><use href="#tex" x="585" y="713"/><use href="#tjp" x="609" y="713"/><use href="#tbx" x="634" y="713"/><use href="#tco" x="658" y="713"/><use href="#tfi" x="682" y="713"/><use href="#tjo" x="706" y="713"/><use href="#tjo" x="730" y="713"/><use href="#tjo" x="754" y="713"/><use href="#tsk" x="778" y="713"/><use href="#ttu" x="802" y="713"/><use href="#tex" x="825" y="713"/><use href="#tmv" x="850" y="713"/><use href="#tco" x="874" y="713"/><use href="#ttu" x="898" y="713"/><use href="#tmv" x="922" y="713"/><use href="#tsk" x="946" y="713"/><use href="#ttu" x="970" y="713"/><use href="#tbx" x="994" y="713"/><use href="#tco" x="1018" y="713"/><use href="#tbx" x="1042" y="713"/><use href="#tco" x="1066" y="713"/><use href="#tjo" x="1090" y="713"/><use href="#tsk" x="1114" y="713"/><use href="#tex" x="1137" y="713"/><use href="#tjp" x="1161" y="713"/><use href="#tjo" x="1186" y="713"/><use href="#tjo" x="1210" y="713"/><use href="#tlk" x="1234" y="713"/><use href="#tjo" x="1258" y="713"/><use href="#tsk" x="1282" y="713"/><use href="#tex" x="1305" y="713"/>
</g>
<use href="#gear" x="1345" y="717" fill="#666"/>

<!-- taskbar -->
<rect x="0" y="738" width="1366" height="30" fill="#0d0d0d"/>
<rect x="185" y="738" width="36" height="30" fill="#3c3c3c"/>
<path d="M10,746.500L17,745.500V752.500H10ZM18,745.300L26,744V752.500H18ZM10,753.500H17V760.500L10,759.500ZM18,753.500H26V762L18,760.700Z" fill="#fff"/>
<circle cx="57" cy="751" r="5.500" fill="none" stroke="#fff" stroke-width="1.300"/><path d="M53,755L47,761" stroke="#fff" stroke-width="1.500"/>
<path d="M83,747H93V758H83ZM82,744H93M82,761H93M96,744V747M96,750H98V754H96M96,758V761" fill="none" stroke="#fff" stroke-width="1.200"/>
<path d="M121,746H129L131,748H137V762H121Z" fill="#f4d674"/><path d="M121,751H137V762H121Z" fill="#fbe9a0"/><path d="M125,762V756H133V762H130V758.500H128V762Z" fill="#2a9ee8"/>
<path d="M160,745H172V749L166,758H172V762H160V758L166,749H160Z" fill="#c41a1a" stroke="#7a0e0e" stroke-width=".7"/>
<rect x="195" y="745" width="16" height="16" fill="#fbdcb8"/><path d="M198,746H207V749H201V752H206V755H201V760H198Z" fill="#d9822b"/><rect x="203" y="757" width="6" height="2" fill="#e89d55"/>
<circle cx="240" cy="753" r="7.500" fill="#dd4b39"/><path d="M240,753L233.500,749.200A7.500,7.500 0 0 0 236.200,759.500L240,760.500Z" fill="#1a9e4b"/><path d="M240,753L246.500,749.200A7.500,7.500 0 0 1 240,760.500Z" fill="#f8c31b"/><circle cx="240" cy="753" r="3.300" fill="#4a8df0" stroke="#fff"/>
<circle cx="277" cy="753" r="8" fill="#35a56e"/><ellipse cx="277" cy="753" rx="6" ry="2.500" fill="none" stroke="#c8f0d4" stroke-width=".8"/><ellipse cx="277" cy="753" rx="6" ry="2.500" fill="none" stroke="#c8f0d4" stroke-width=".8" transform="rotate(60 277 753)"/><ellipse cx="277" cy="753" rx="6" ry="2.500" fill="none" stroke="#c8f0d4" stroke-width=".8" transform="rotate(120 277 753)"/>
<rect x="306" y="745" width="16" height="16" fill="#fff"/><path d="M306,756L311,749L314,753L316,751L322,757V745H306Z" fill="#0d0d0d"/>
<g fill="#70b2e4"><rect x="115" y="766" width="28" height="2"/><rect x="185" y="766" width="36" height="2"/><rect x="226" y="766" width="28" height="2"/><rect x="263" y="766" width="28" height="2"/><rect x="300" y="766" width="28" height="2"/></g>
<g fill="none" stroke="#fff" stroke-width="1.100">
<circle cx="1075" cy="751" r="3.300"/><circle cx="1082" cy="749" r="2.800"/><path d="M1071,760Q1071,755 1075,755Q1079,755 1079,760M1080,753Q1086,753 1086,757"/>
<path d="M1102,756L1107,751L1112,756" stroke-width="1.300"/>
<path d="M1145,747.500V754M1149,747.500V754M1143,751H1148V754.500Q1146,756.500 1144.500,755V751ZM1152,750H1163V758H1152Z" transform="translate(0,0)"/>
<path d="M1175,760Q1181,748 1187,745M1178,760Q1182,752 1187,749M1181,760Q1184,756 1187,753" stroke-dasharray="2 1"/>
<path d="M1197,750H1200L1204,746V760L1200,756H1197ZM1207,750Q1209,753 1207,756M1209.500,747.500Q1213,753 1209.500,758.500" />
</g>
<path d="M1125,757Q1124,752 1129,752Q1131,747 1136,749Q1140,750 1139,753L1138,758H1127Z" fill="#aaa"/><circle cx="1135" cy="757" r="3.800" fill="#2a8cd8" stroke="#fff" stroke-width=".6"/>
<text x="1222" y="757" style="font-size:12px;fill:#e8e8e8">ENG</text>
<text x="1261" y="757" style="font-size:12px;fill:#e8e8e8">8:22 PM</text>
<path d="M1325,746H1341V758H1335L1333,760L1331,758H1325Z" fill="#fff"/><path d="M1328,749H1338M1328,752H1338M1328,755H1335" stroke="#111"/>
<path d="M1365.500,738V768" stroke="#444"/>
</svg>
</body></html>
